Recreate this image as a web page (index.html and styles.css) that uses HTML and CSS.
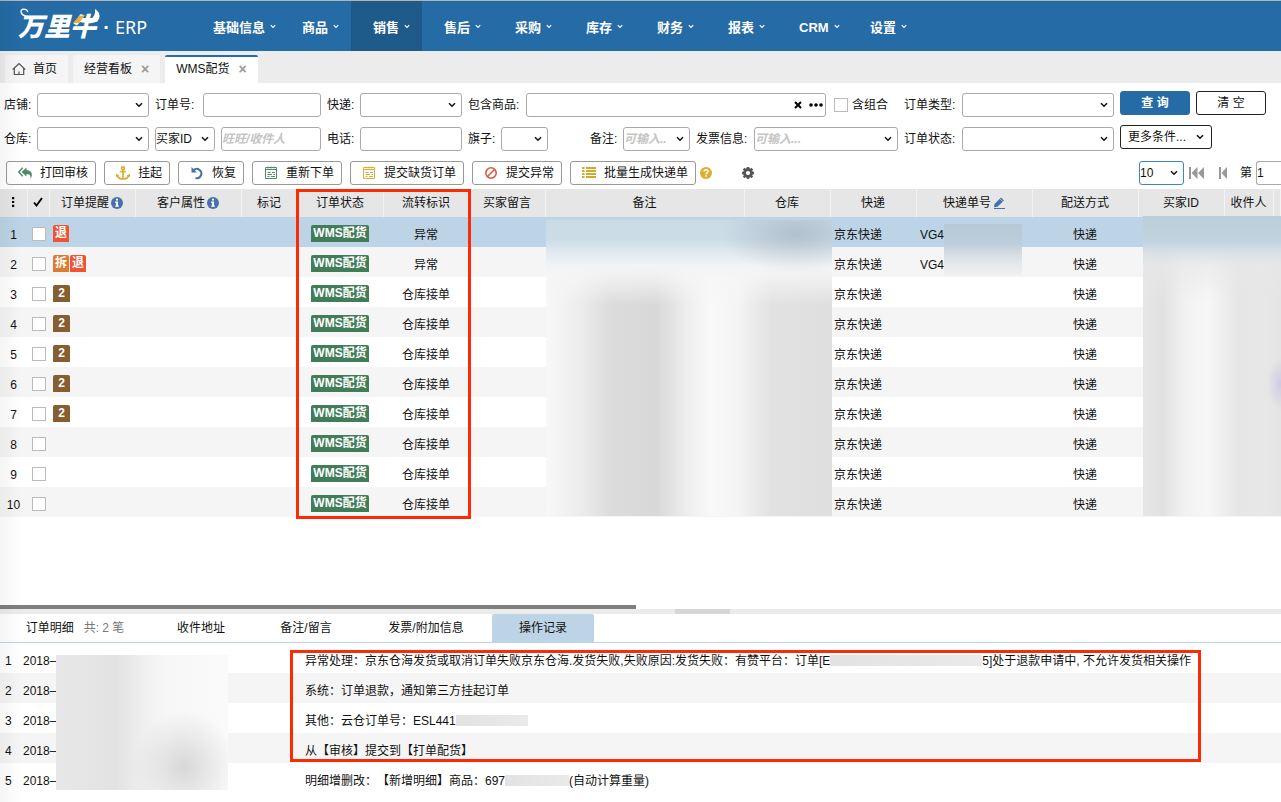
FILE: index.html
```html
<!DOCTYPE html>
<html lang="zh-CN">
<head>
<meta charset="utf-8">
<title>万里牛 ERP</title>
<link rel="stylesheet" href="styles.css">
</head>
<body>
<svg class="defs" aria-hidden="true">
  <symbol id="chev" viewBox="0 0 8 6"><path d="M1 1.2l3 3 3-3" fill="none" stroke="currentColor" stroke-width="1.5"/></symbol>
  <symbol id="info" viewBox="0 0 12 12"><circle cx="6" cy="6" r="6" fill="#4870ae"/><path d="M5 1.8h2v1.8H5zM4.2 4.6H7v3.8h.8v1.3H4.2V8.400H5V5.900h-.8z" fill="#fff"/></symbol>
  <symbol id="sheet" viewBox="0 0 14 14"><path d="M1.500 1.500h11v11h-11zM1 3.500h12" fill="none" stroke="currentColor"/><path d="M4 .5v2M7 .5v2M10 .5v2M3.500 6.500h3M8 6.500h3M3.500 8.500h4.500M9.500 8.500h1.500M3.500 10.500h2M7 10.500h4" fill="none" stroke="currentColor"/></symbol>
</svg>

<header class="nav">
  <a class="logo" href="#">
    <span class="logo-mark">万里牛
      <svg class="logo-art" viewBox="0 0 84 32"><path d="M26 9C15 11 4 9 3 4c-.5-3.500 5-4 7 0" fill="none" stroke="#fff" stroke-width="1.300"/><path d="M77 1c7 4 6 13-3 14-5 .500-8 0-12-1l1-3c8 2 15 0 14-10z" fill="#fff"/><path d="M61 8l6-1-6 8h-6z" fill="#e9b23c"/></svg>
    </span>
    <span class="logo-dot">·</span><span class="logo-erp">ERP</span>
  </a>
  <nav class="menu">
    <a href="#">基础信息<svg><use href="#chev"/></svg></a>
    <a href="#">商品<svg><use href="#chev"/></svg></a>
    <a href="#" class="on">销售<svg><use href="#chev"/></svg></a>
    <a href="#">售后<svg><use href="#chev"/></svg></a>
    <a href="#">采购<svg><use href="#chev"/></svg></a>
    <a href="#">库存<svg><use href="#chev"/></svg></a>
    <a href="#">财务<svg><use href="#chev"/></svg></a>
    <a href="#">报表<svg><use href="#chev"/></svg></a>
    <a href="#">CRM<svg><use href="#chev"/></svg></a>
    <a href="#">设置<svg><use href="#chev"/></svg></a>
  </nav>
</header>

<div class="tabs">
  <a class="tab home" href="#"><svg viewBox="0 0 14 14"><path d="M.8 7.500L7 1.500l6.200 6M2.300 6.300v6.200h9.400V6.300M7 12.500V9.500" fill="none" stroke="#555" stroke-width="1.200"/></svg>首页</a>
  <a class="tab" href="#">经营看板<span class="x">×</span></a>
  <a class="tab on" href="#">WMS配货<span class="x">×</span></a>
</div>

<form class="filters">
  <div class="frow">
    <div class="group"><label class="l2" for="shop">店铺:</label><span class="pick"><select id="shop"><option></option></select><svg><use href="#chev"/></svg></span></div>
    <div class="group"><label class="l3" for="ono">订单号:</label><input id="ono" type="text"></div>
    <div class="group"><label class="l2" for="exp">快递:</label><span class="pick"><select id="exp"><option></option></select><svg><use href="#chev"/></svg></span></div>
    <div class="group"><label class="l4" for="goods">包含商品:</label>
      <span class="pick"><input id="goods" type="text"><span class="tools"><svg class="clear" viewBox="0 0 8 8"><path d="M1 1l6 6M7 1L1 7" stroke="#000" stroke-width="2"/></svg><svg class="more" viewBox="0 0 14 4"><circle cx="2" cy="2" r="1.800"/><circle cx="7" cy="2" r="1.800"/><circle cx="12" cy="2" r="1.800"/></svg></span></span>
      <label class="combo"><input type="checkbox">含组合</label></div>
    <div class="group"><label class="l4" for="type">订单类型:</label><span class="pick"><select id="type"><option></option></select><svg><use href="#chev"/></svg></span></div>
    <div class="acts"><button type="button" class="primary">查 询</button><button type="button">清 空</button></div>
  </div>
  <div class="frow">
    <div class="group"><label class="l2" for="wh">仓库:</label><span class="pick"><select id="wh"><option></option></select><svg><use href="#chev"/></svg></span></div>
    <div class="group by"><span class="pick id"><select aria-label="买家"><option>买家ID</option></select><svg><use href="#chev"/></svg></span><input type="text" aria-label="买家信息" placeholder="旺旺/收件人"></div>
    <div class="group"><label class="l2" for="tel">电话:</label><input id="tel" type="text"></div>
    <div class="group"><label class="l2" for="flag">旗子:</label><span class="pick flag"><select id="flag"><option></option></select><svg><use href="#chev"/></svg></span>
      <label class="l2" for="note">备注:</label><span class="pick note"><input id="note" type="text" placeholder="可输入.."><svg><use href="#chev"/></svg></span>
      <label class="l4" for="inv">发票信息:</label><span class="pick"><input id="inv" type="text" placeholder="可输入..."><svg><use href="#chev"/></svg></span></div>
    <div class="group"><label class="l4" for="st">订单状态:</label><span class="pick"><select id="st"><option></option></select><svg><use href="#chev"/></svg></span></div>
    <div class="acts"><button type="button" class="wide">更多条件...<svg><use href="#chev"/></svg></button></div>
  </div>
</form>

<div class="toolbar">
  <button type="button"><svg viewBox="0 0 14 14"><path d="M8.500 1.500L3.500 6l5 4.500V8c3 0 4.500 1 4 5 3-4.500 1-8.800-4-9z" fill="#528a68"/><path d="M4.700 1.800L.8 6l3.900 4.200" fill="none" stroke="#528a68" stroke-width="1.500"/></svg>打回审核</button>
  <button type="button"><svg viewBox="0 0 14 14"><g fill="none" stroke="#dcae32" stroke-width="1.700"><circle cx="7" cy="2.300" r="1.400"/><path d="M7 4v9M4.200 5.700h5.600M1.500 9.500C2 12 4.500 13 7 13s5-1 5.500-3.500"/></g><path d="M0 11V7.800L3.300 9.500zM14 11V7.800l-3.300 1.700z" fill="#dcae32"/></svg>挂起</button>
  <button type="button"><svg viewBox="0 0 14 14"><path d="M3.500 4.300A4.600 4.600 0 1 1 5.500 12" fill="none" stroke="#4870ae" stroke-width="2"/><path d="M1.500 1v5.500H7z" fill="#4870ae"/></svg>恢复</button>
  <button type="button" class="green"><svg><use href="#sheet"/></svg>重新下单</button>
  <button type="button" class="gold"><svg><use href="#sheet"/></svg>提交缺货订单</button>
  <button type="button"><svg viewBox="0 0 14 14"><circle cx="7" cy="7" r="5.200" fill="none" stroke="#d85a4c" stroke-width="1.600"/><path d="M3.500 10.500l7-7" stroke="#d85a4c" stroke-width="1.600"/></svg>提交异常</button>
  <button type="button"><svg viewBox="0 0 14 14"><path d="M0 2h2.500M4 2h10M0 5h2.500M4 5h10M0 8h2.500M4 8h10M0 11h2.500M4 11h10" stroke="#d3a92f" stroke-width="2"/></svg>批量生成快递单</button>
  <svg class="help" viewBox="0 0 12 12"><circle cx="6" cy="6" r="6" fill="#dcae32"/><path d="M4 4.600C4 2 8.200 2 8.100 4.500 8 6 6 5.800 6 7.300" fill="none" stroke="#fff" stroke-width="1.500"/><path d="M5.200 8.200h1.600v1.600H5.200z" fill="#fff"/></svg>
  <svg class="gear" viewBox="0 0 14 14"><circle cx="7" cy="7" r="3.500" fill="none" stroke="#555" stroke-width="2.800"/><path d="M7 1v2M7 11v2M1 7h2M11 7h2M2.700 2.700l1.400 1.400M9.900 9.900l1.400 1.400M2.700 11.300l1.400-1.400M9.900 4.100l1.400-1.400" stroke="#555" stroke-width="2.500"/></svg>
  <div class="pager">
    <span class="pick size"><select aria-label="每页"><option>10</option></select><svg><use href="#chev"/></svg></span>
    <button type="button" class="pg first" aria-label="首页"><svg viewBox="0 0 15 12"><path d="M0 0h2v12H0zM8.500 0v12l-6-6zM15 0v12L9 6z" fill="#999"/></svg></button>
    <button type="button" class="pg prev" aria-label="上一页"><svg viewBox="0 0 8 12"><path d="M0 0h2v12H0zM8 0v12L2.500 6z" fill="#999"/></svg></button>
    <label for="page">第</label><input id="page" type="text" value="1">
  </div>
</div>

<main class="grid">
  <table class="orders">
    <colgroup><col class="w27"><col class="w22"><col class="w86"><col class="w106"><col class="w56"><col class="w86"><col class="w86"><col class="w76"><col class="w199"><col class="w86"><col class="w86"><col class="w116"><col class="w106"><col class="w86"><col class="w49"><col></colgroup>
    <thead><tr>
      <th><svg class="dots" viewBox="0 0 4 10"><path d="M1 0h2.200v2.200H1zM1 3.900h2.200v2.200H1zM1 7.800h2.200V10H1z"/></svg></th>
      <th><svg class="tick" viewBox="0 0 10 10"><path d="M1 5.500L3.500 8.500 9 1" fill="none" stroke="#000" stroke-width="1.900"/></svg></th>
      <th>订单提醒<svg class="ic"><use href="#info"/></svg></th><th>客户属性<svg class="ic"><use href="#info"/></svg></th><th>标记</th><th>订单状态</th><th>流转标识</th><th>买家留言</th><th>备注</th><th>仓库</th><th>快递</th>
      <th>快递单号<svg class="ic" viewBox="0 0 12 12"><path d="M1.500 7L8 .5l3 3-6.500 6.200L1 10.200z" fill="#4870ae"/><path d="M7 1.800l2.800 2.800" stroke="#e6e6e6" stroke-width=".7"/><path d="M1 11.500h11" stroke="#4870ae"/></svg></th>
      <th>配送方式</th><th>买家ID</th><th>收件人</th><th></th>
    </tr></thead>
    <tbody>
      <tr class="sel"><td>1</td><td><input type="checkbox" aria-label="选择1"></td><td class="l"><b class="tag red">退</b></td><td></td><td></td><td><b class="tag wms">WMS配货</b></td><td>异常</td><td></td><td></td><td></td><td class="l">京东快递</td><td class="l">VG4</td><td>快递</td><td></td><td></td><td></td></tr>
      <tr><td>2</td><td><input type="checkbox" aria-label="选择2"></td><td class="l"><b class="tag orange">拆</b><b class="tag red">退</b></td><td></td><td></td><td><b class="tag wms">WMS配货</b></td><td>异常</td><td></td><td></td><td></td><td class="l">京东快递</td><td class="l">VG4</td><td>快递</td><td></td><td></td><td></td></tr>
      <tr><td>3</td><td><input type="checkbox" aria-label="选择3"></td><td class="l"><b class="tag num">2</b></td><td></td><td></td><td><b class="tag wms">WMS配货</b></td><td>仓库接单</td><td></td><td></td><td></td><td class="l">京东快递</td><td></td><td>快递</td><td></td><td></td><td></td></tr>
      <tr><td>4</td><td><input type="checkbox" aria-label="选择4"></td><td class="l"><b class="tag num">2</b></td><td></td><td></td><td><b class="tag wms">WMS配货</b></td><td>仓库接单</td><td></td><td></td><td></td><td class="l">京东快递</td><td></td><td>快递</td><td></td><td></td><td></td></tr>
      <tr><td>5</td><td><input type="checkbox" aria-label="选择5"></td><td class="l"><b class="tag num">2</b></td><td></td><td></td><td><b class="tag wms">WMS配货</b></td><td>仓库接单</td><td></td><td></td><td></td><td class="l">京东快递</td><td></td><td>快递</td><td></td><td></td><td></td></tr>
      <tr><td>6</td><td><input type="checkbox" aria-label="选择6"></td><td class="l"><b class="tag num">2</b></td><td></td><td></td><td><b class="tag wms">WMS配货</b></td><td>仓库接单</td><td></td><td></td><td></td><td class="l">京东快递</td><td></td><td>快递</td><td></td><td></td><td></td></tr>
      <tr><td>7</td><td><input type="checkbox" aria-label="选择7"></td><td class="l"><b class="tag num">2</b></td><td></td><td></td><td><b class="tag wms">WMS配货</b></td><td>仓库接单</td><td></td><td></td><td></td><td class="l">京东快递</td><td></td><td>快递</td><td></td><td></td><td></td></tr>
      <tr><td>8</td><td><input type="checkbox" aria-label="选择8"></td><td></td><td></td><td></td><td><b class="tag wms">WMS配货</b></td><td>仓库接单</td><td></td><td></td><td></td><td class="l">京东快递</td><td></td><td>快递</td><td></td><td></td><td></td></tr>
      <tr><td>9</td><td><input type="checkbox" aria-label="选择9"></td><td></td><td></td><td></td><td><b class="tag wms">WMS配货</b></td><td>仓库接单</td><td></td><td></td><td></td><td class="l">京东快递</td><td></td><td>快递</td><td></td><td></td><td></td></tr>
      <tr><td>10</td><td><input type="checkbox" aria-label="选择10"></td><td></td><td></td><td></td><td><b class="tag wms">WMS配货</b></td><td>仓库接单</td><td></td><td></td><td></td><td class="l">京东快递</td><td></td><td>快递</td><td></td><td></td><td></td></tr>
    </tbody>
  </table>
  <div class="mask remark"></div>
  <div class="mask waybill"></div>
  <div class="mask buyer"></div>
  <div class="frame status"></div>
  <div class="hbar"></div>
</main>

<section class="detail">
  <div class="splitter"></div>
  <div class="dtabs" role="tablist">
    <button type="button" role="tab" class="d150">订单明细<span class="count">共: 2 笔</span></button>
    <button type="button" role="tab" class="d102">收件地址</button>
    <button type="button" role="tab" class="d108">备注/留言</button>
    <button type="button" role="tab" class="d132">发票/附加信息</button>
    <button type="button" role="tab" class="d102 on" aria-selected="true">操作记录</button>
  </div>
  <div class="logs">
    <table>
      <colgroup><col class="c1"><col class="c2"><col></colgroup>
      <tr><td>1</td><td>2018–</td><td>异常处理：京东仓海发货或取消订单失败京东仓海.发货失败,失败原因:发货失败：有赞平台：订单[E<i class="hide h152"></i>5]处于退款申请中, 不允许发货相关操作</td></tr>
      <tr><td>2</td><td>2018–</td><td>系统：订单退款，通知第三方挂起订单</td></tr>
      <tr><td>3</td><td>2018–</td><td>其他：云仓订单号：ESL441<i class="hide h72"></i></td></tr>
      <tr><td>4</td><td>2018–</td><td>从【审核】提交到【打单配货】</td></tr>
      <tr><td>5</td><td>2018–</td><td>明细增删改：【新增明细】商品：697<i class="hide h64"></i>(自动计算重量)</td></tr>
    </table>
    <div class="mask dates"></div>
    <div class="frame log"></div>
  </div>
</section>
</body>
</html>
```

FILE: styles.css
```css
* { box-sizing: border-box; }
body {
  margin: 0; min-height: 100vh; display: flex; flex-direction: column;
  background: #fff; color: #111; overflow: hidden;
  font: 12px/18px "Liberation Sans", "Noto Sans CJK SC", sans-serif;
  text-spacing-trim: space-all;
}
body::after {
  content: ""; position: fixed; inset: 0 auto 0 0; width: 22px; pointer-events: none;
  background: linear-gradient(90deg, rgba(0,0,0,.04), rgba(0,0,0,0));
}
.defs { display: none; }
a { color: inherit; text-decoration: none; }
input, select, button { font: inherit; color: #111; margin: 0; }
svg { flex: none; }

/* top navigation */
.nav { height: 51px; display: flex; background: #256ba5; border-top: 1px solid #b3b3b3; color: #fff; }
.logo { width: 191px; padding: 2px 0 0 18px; display: flex; align-items: center; }
.logo-mark { position: relative; width: 80px; font-size: 26px; line-height: 32px; font-weight: 900; font-style: italic; white-space: nowrap; }
.logo-art { position: absolute; left: 0; top: -3px; width: 84px; height: 32px; }
.logo-dot { width: 17px; text-align: center; font-size: 20px; font-weight: 700; }
.logo-erp { font: 18px/20px "Noto Sans", sans-serif; }
.menu { display: flex; font-size: 13px; font-weight: 700; }
.menu a { min-width: 71px; padding: 4px 4px 0 22px; display: flex; align-items: center; white-space: nowrap; }
.menu svg { width: 6px; height: 5px; margin: 0 0 4px 5px; }
.menu .on { background: #1f5b8a; }

/* page tabs */
.tabs { height: 32px; padding: 4px 5px 0; display: flex; gap: 5px; background: #ececec; }
.tab { padding: 0 11px; display: flex; align-items: center; background: #f5f5f5; border-radius: 2px 2px 0 0; }
.tab.home { padding-left: 7px; }
.tab svg { width: 14px; height: 14px; margin-right: 7px; }
.tab.on { background: #fff; border-top: 2px solid #256ba5; padding-bottom: 2px; }
.x { margin-left: 9px; color: #999; font-size: 14px; font-weight: 700; }

/* filters */
.filters { padding: 8px 14px 0 4px; display: grid; gap: 8px; }
.frow { height: 26px; display: grid; grid-template-columns: 145px 166px 135px minmax(0,1fr) 210px 147px; gap: 6px; align-items: end; }
.group { height: 24px; display: flex; align-items: center; white-space: nowrap; }
.group > * { flex: none; }
.l2 { width: 33px; } .l3 { width: 48px; } .l4 { width: 58px; }
input[type=text], select {
  appearance: none; width: 100%; height: 24px; min-width: 0; padding: 0;
  background: #fff; border: 1px solid #aaa; border-radius: 3px; outline: 0;
}
.group > input[type=text] { flex: 1 1 0; width: 0; }
.group > .pick { flex: 1 1 0; }
.pick { position: relative; display: flex; min-width: 0; }
.pick > svg { position: absolute; right: 6px; top: 9px; width: 8px; height: 6px; }
.group > .id { flex: 0 0 60px; margin-right: 6px; }
.group > .flag { flex: 0 0 47px; margin-right: 42px; }
.group > .note { flex: 0 0 67px; margin-right: 6px; }
::placeholder { color: #c4c4c4; font-style: italic; font-weight: 700; opacity: 1; }
.tools { position: absolute; right: 3px; top: 8px; display: flex; align-items: center; gap: 7px; }
.clear { width: 8px; height: 8px; } .more { width: 14px; height: 4px; }
input[type=checkbox] { appearance: none; display: block; width: 14px; height: 14px; background: #fff; border: 1px solid #bbb; }
.group > .combo { width: 72px; padding-left: 8px; display: flex; align-items: center; gap: 4px; }
.acts { align-self: start; display: flex; gap: 6px; }
.acts button { width: 70px; height: 24px; padding: 0; background: #fff; border: 1px solid #222; border-radius: 3px; }
.acts .primary { background: #256ba5; border-color: #256ba5; color: #fff; font-weight: 700; }
.acts .wide { width: 92px; display: flex; align-items: center; justify-content: space-between; padding: 0 7px; }
.wide svg { width: 8px; height: 6px; }

/* toolbar */
.toolbar { padding: 10px 0 4px 6px; display: flex; gap: 8px; align-items: center; }
.toolbar > button { height: 24px; padding: 0 7px 0 11px; display: flex; align-items: center; gap: 8px; white-space: nowrap; background: #fff; border: 1px solid #999; border-radius: 3px; }
.toolbar > button svg { width: 14px; height: 14px; }
.green svg { color: #528a68; } .gold svg { color: #dcae32; }
.help { width: 12px; height: 12px; margin-left: -4px; }
.gear { width: 14px; height: 14px; margin-left: 21px; }
.pager { width: 142px; margin-left: auto; display: flex; align-items: center; white-space: nowrap; }
.size { flex: 0 0 45px; margin-right: 5px; }
.size select { border-color: #3a87c8; }
.pg { padding: 0; border: 0; background: none; display: flex; }
.first svg { width: 15px; height: 12px; } .prev svg { width: 8px; height: 12px; }
.prev { margin: 0 13px 0 15px; }
.pager input[type=text] { flex: 1; width: 0; margin-left: 4px; border-right: 0; border-radius: 3px 0 0 3px; }

/* orders */
.grid { position: relative; flex: 1 0 auto; }
table { width: 100%; border-collapse: collapse; table-layout: fixed; }
th { height: 28px; padding: 0; background: #e6e6e6; border-right: 1px solid #f3f3f3; font-weight: 400; white-space: nowrap; }
.orders tr:nth-child(even) td, .logs tr:nth-child(even) td { background: #f5f5f5; }
.orders .sel td { background: #bcd4e6; }
.orders td { height: 30px; padding: 6px 0 0; text-align: center; white-space: nowrap; }
.orders td.l { text-align: left; padding-left: 4px; }
.orders td input { margin: 0 auto; }
.orders td:nth-child(2) { padding: 4px 0 0 2px; }
.orders td:nth-child(3), .orders td:nth-child(6) { padding-top: 2px; }
.w22 { width: 22px; } .w27 { width: 27px; } .w49 { width: 49px; } .w56 { width: 56px; } .w76 { width: 76px; }
.w86 { width: 86px; } .w106 { width: 106px; } .w116 { width: 116px; } .w199 { width: 199px; }
.ic { width: 12px; height: 12px; margin-left: 2px; vertical-align: -2px; }
.dots { width: 4px; height: 10px; } .tick { width: 10px; height: 10px; }
.tag { display: inline-block; min-width: 16px; height: 17px; margin-right: 1px; padding: 0 2px; line-height: 17px; text-align: center; color: #fff; border-radius: 2px 2px 0 0; vertical-align: middle; }
.red { background: #ef5332; } .orange { background: #de7a31; } .num { background: #875e2f; min-width: 17px; } .wms { background: #417d58; margin: 0; }
.mask { position: absolute; }
.remark {
  left: 546px; top: 31px; width: 286px; height: 296px;
  background:
    radial-gradient(ellipse 75px 38px at 250px 14px, rgba(150,165,180,.5), rgba(150,165,180,0)),
    linear-gradient(180deg, #cbdbe6 0, #cddde8 20px, #e4ebf0 34px, #f2f3f5 46px, rgba(246,246,246,.8) 56px, rgba(248,248,248,0) 85px),
    linear-gradient(90deg, #f8f8f8 0, #ececec 35px, #dcdcdc 65px, #d8d8d8 110px, #eee 142px, #f9f9f9 165px, #f5f5f5 190px, #e2e2e2 225px, #dfdfdf 100%);
}
.waybill { left: 944px; top: 35px; width: 78px; height: 51px; background: linear-gradient(180deg, #b5c9d7 0, #bccddb 20px, #d6dee4 30px, #e6e8ea 40px, #eeeff0 100%); }
.buyer {
  left: 1143px; top: 27px; right: 0; height: 300px;
  background:
    radial-gradient(ellipse 14px 26px at 100% 168px, rgba(190,185,225,.6), rgba(190,185,225,0)),
    linear-gradient(180deg, #bbcdd9 0, #c1d3df 25px, rgba(218,225,230,.9) 38px, rgba(232,232,232,.7) 50px, rgba(240,240,240,0) 85px),
    linear-gradient(90deg, #e6e6e6 0, #e1e1e1 20px, #f1f1f1 40px, #f7f7f7 65px, #e6e6e6 95px, #e8e8e8 115px, #e4e4e4 100%);
}
.frame { position: absolute; border: 3px solid #fd2b05; pointer-events: none; }
.status { left: 296px; top: 0; width: 175px; height: 330px; }
.hbar { position: absolute; left: 0; bottom: 0; width: 636px; height: 4px; background: #7d807d; }

/* detail pane */
.detail { margin-bottom: 9px; }
.splitter { height: 5px; background: linear-gradient(#d6d6d6, #d6d6d6) 675px 0 / 55px 5px no-repeat #ebebeb; }
.dtabs { display: flex; border-bottom: 1px solid #bcd4e6; }
.dtabs button { height: 28px; padding: 0; border: 0; background: none; white-space: nowrap; text-align: center; }
.dtabs .on { background: #bcd4e6; border-radius: 2px 2px 0 0; }
.d102 { width: 102px; } .d108 { width: 108px; } .d132 { width: 132px; } .d150 { width: 150px; }
.count { margin-left: 10px; color: #777; }
.logs { position: relative; }
.logs td { height: 30px; padding: 6px 0 0; white-space: nowrap; }
.logs td:first-child { padding-left: 5px; }
.c1 { width: 23px; } .c2 { width: 282px; }
.hide { display: inline-block; height: 11px; vertical-align: -1px; background: linear-gradient(90deg, #e2e2e2, #eaeaea); }
.h152 { width: 152px; } .h72 { width: 72px; } .h64 { width: 64px; }
.dates {
  left: 56px; top: 12px; width: 172px; height: 135px;
  background:
    radial-gradient(ellipse 52px 56px at 128px 112px, rgba(208,208,208,.8), rgba(220,220,220,0)),
    linear-gradient(90deg, #e8e8e8 0, #e2e2e2 60px, #eee 85px, #f7f7f7 110px, #fafafa 100%);
}
.log { left: 290px; top: 7px; width: 911px; height: 112px; }
```
